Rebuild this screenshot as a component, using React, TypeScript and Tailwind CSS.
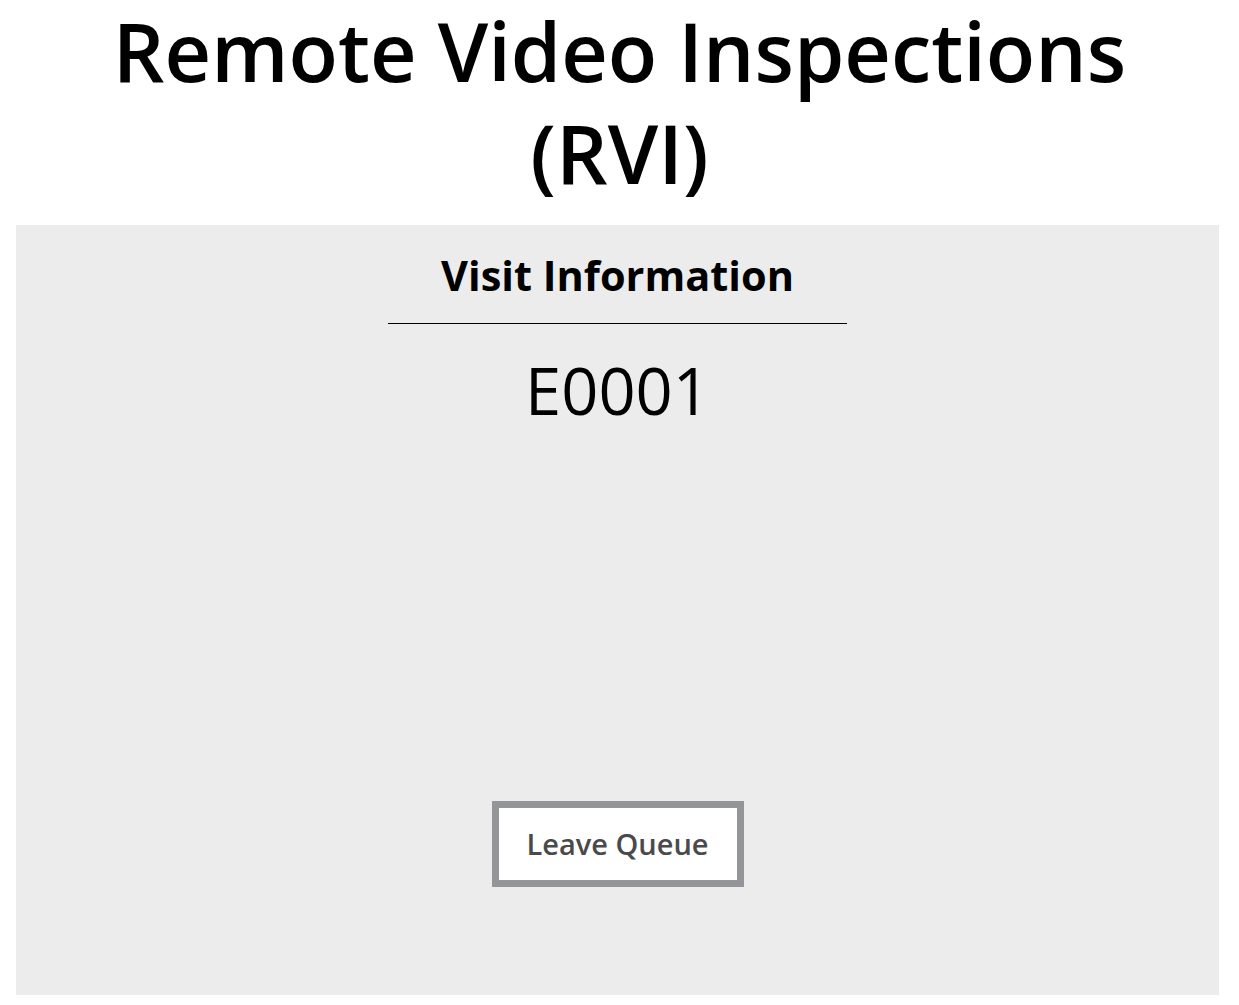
const font = { fontFamily: '"Open Sans", "Liberation Sans", sans-serif' };

const VisitPanel = ({ visitId }: { visitId: string }) => {
  return (
    <section className="ml-4 mr-5 h-[770px] bg-[#ebeceb] flex flex-col items-center">
      <h2 className="mt-[22px] text-[41.5px] leading-[56px] font-bold text-black">
        Visit Information
      </h2>
      <hr className="mt-[20px] w-[459px] border-0 border-t border-black" />
      <p className="mt-[26px] text-[65px] leading-[80px] font-normal text-black">
        {visitId}
      </p>
      <button
        type="button"
        className="mt-[371px] w-[252px] h-[86px] border-[7px] border-[#939598] bg-white text-[29px] font-semibold text-[#4a4a4c]"
      >
        Leave Queue
      </button>
    </section>
  );
};

export default function App() {
  return (
    <div className="w-[1239px] min-h-[1005px] bg-white" style={font}>
      <h1 className="mx-auto max-w-[1100px] text-center text-[81px] leading-[102px] font-semibold text-black">
        Remote Video Inspections (RVI)
      </h1>
      <div className="h-[21px]" />
      <VisitPanel visitId="E0001" />
    </div>
  );
}
